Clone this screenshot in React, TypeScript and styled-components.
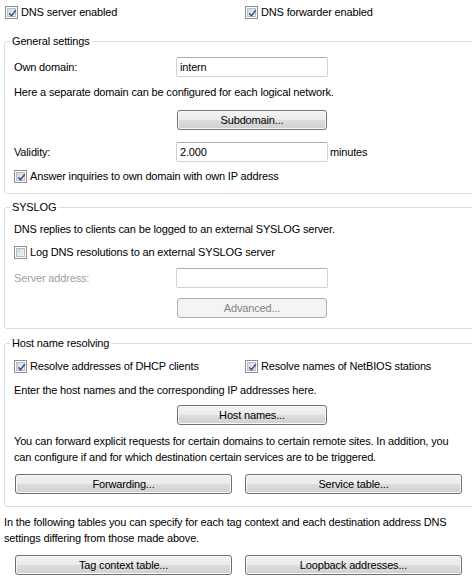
import styled, { createGlobalStyle } from "styled-components";

const GlobalStyle = createGlobalStyle`
  html, body {
    margin: 0;
    padding: 0;
    background: #fff;
    overflow: hidden;
  }
  body {
    font-family: "Liberation Sans", Arial, sans-serif;
    font-size: 11px;
    letter-spacing: -0.16px;
    color: #000;
  }
`;

const Page = styled.div`
  width: 480px;
  padding: 5px 0 0 4px;
  box-sizing: border-box;
`;

const TopRow = styled.div`
  display: grid;
  grid-template-columns: 240px auto;
  padding-left: 1px;
`;

const Group = styled.fieldset<{ $mt: number; $pb: number }>`
  margin: ${(p) => p.$mt}px 0 0 0;
  padding: 0 9px ${(p) => p.$pb}px 9px;
  border: 1px solid #d5dfe5;
  border-radius: 3px;
  min-width: 0;
`;

const Legend = styled.legend`
  margin-left: -4px;
  padding: 0 2px;
  line-height: 14px;
`;

const CheckLabel = styled.label<{ $mt?: number }>`
  display: flex;
  align-items: center;
  gap: 3px;
  height: 14px;
  line-height: 14px;
  white-space: nowrap;
  margin-top: ${(p) => p.$mt ?? 0}px;
`;

const Box = styled.span`
  position: relative;
  width: 13px;
  height: 13px;
  box-sizing: border-box;
  border: 1px solid #8e8f8f;
  background: #fff;
  padding: 1px;
  display: flex;
  flex-shrink: 0;
`;

const BoxInner = styled.span`
  flex: 1;
  border: 1px solid #b9bcc0;
  background: linear-gradient(135deg, #d4d7db 0%, #f4f4f4 100%);
`;

const Tick = styled.svg`
  position: absolute;
  left: 2px;
  top: 2px;
`;

const CheckRow = styled.div<{ $mt: number }>`
  display: grid;
  grid-template-columns: 231px auto;
  margin-top: ${(p) => p.$mt}px;
`;

const FieldRow = styled.div<{ $mt: number }>`
  display: grid;
  grid-template-columns: 162px 152px auto;
  align-items: center;
  height: 20px;
  margin-top: ${(p) => p.$mt}px;
`;

const Label = styled.span<{ $disabled?: boolean }>`
  color: ${(p) => (p.$disabled ? "#a0a0a0" : "#000")};
`;

const Unit = styled.span`
  padding-left: 2px;
`;

const Input = styled.input`
  width: 152px;
  height: 20px;
  box-sizing: border-box;
  border: 1px solid #d0d4d9;
  border-top-color: #abadb3;
  border-radius: 2px;
  padding: 0 3px;
  font: inherit;
  letter-spacing: inherit;
  color: #000;
  background: #fff;
  outline: none;
`;

const Para = styled.p<{ $mt: number }>`
  margin: ${(p) => p.$mt}px 0 0 0;
  line-height: 16px;
  white-space: nowrap;
`;

const Button = styled.button<{ $w: number }>`
  width: ${(p) => p.$w}px;
  height: 20px;
  box-sizing: border-box;
  margin-left: 1px;
  border: 1px solid #707070;
  border-radius: 3px;
  padding: 0;
  background: linear-gradient(#f2f2f2 0%, #ebebeb 50%, #dddddd 51%, #d0d0d0 100%);
  box-shadow: inset 0 0 0 1px #fafafa;
  font: inherit;
  letter-spacing: inherit;
  color: #000;
  &:disabled {
    border-color: #adb2b5;
    background: #f4f4f4;
    box-shadow: none;
    color: #838383;
  }
`;

const ButtonPair = styled.div<{ $mt: number; $pl: number }>`
  display: grid;
  grid-template-columns: 217px 217px;
  column-gap: 13px;
  margin-top: ${(p) => p.$mt}px;
  padding-left: ${(p) => p.$pl}px;
`;

const Check = ({ label, checked, mt }: { label: string; checked?: boolean; mt?: number }) => (
  <CheckLabel $mt={mt}>
    <Box>
      <BoxInner />
      {checked && (
        <Tick width="9" height="9" viewBox="0 0 9 9">
          <path d="M1.2 4.3 L3.6 6.8 L7.8 1.2" fill="none" stroke="#42599a" strokeWidth="1.7" />
        </Tick>
      )}
    </Box>
    {label}
  </CheckLabel>
);

export default function App() {
  return (
    <Page>
      <GlobalStyle />
      <TopRow>
        <Check label="DNS server enabled" checked />
        <Check label="DNS forwarder enabled" checked />
      </TopRow>

      <Group $mt={15} $pb={10}>
        <Legend>General settings</Legend>
        <FieldRow $mt={9}>
          <Label>Own domain:</Label>
          <Input defaultValue="intern" />
        </FieldRow>
        <Para $mt={7}>Here a separate domain can be configured for each logical network.</Para>
        <FieldRow $mt={10}>
          <span />
          <Button $w={150}>Subdomain...</Button>
        </FieldRow>
        <FieldRow $mt={12}>
          <Label>Validity:</Label>
          <Input defaultValue="2.000" />
          <Unit>minutes</Unit>
        </FieldRow>
        <Check mt={7} label="Answer inquiries to own domain with own IP address" checked />
      </Group>

      <Group $mt={6} $pb={10}>
        <Legend>SYSLOG</Legend>
        <Para $mt={7}>DNS replies to clients can be logged to an external SYSLOG server.</Para>
        <Check mt={8} label="Log DNS resolutions to an external SYSLOG server" />
        <FieldRow $mt={9}>
          <Label $disabled>Server address:</Label>
          <Input disabled />
        </FieldRow>
        <FieldRow $mt={10}>
          <span />
          <Button $w={150} disabled>
            Advanced...
          </Button>
        </FieldRow>
      </Group>

      <Group $mt={7} $pb={12}>
        <Legend>Host name resolving</Legend>
        <CheckRow $mt={9}>
          <Check label="Resolve addresses of DHCP clients" checked />
          <Check label="Resolve names of NetBIOS stations" checked />
        </CheckRow>
        <Para $mt={9}>Enter the host names and the corresponding IP addresses here.</Para>
        <FieldRow $mt={7}>
          <span />
          <Button $w={150}>Host names...</Button>
        </FieldRow>
        <Para $mt={8}>
          You can forward explicit requests for certain domains to certain remote sites. In addition, you
          <br />
          can configure if and for which destination certain services are to be triggered.
        </Para>
        <ButtonPair $mt={9} $pl={0}>
          <Button $w={217}>Forwarding...</Button>
          <Button $w={217}>Service table...</Button>
        </ButtonPair>
      </Group>

      <Para $mt={7}>
        In the following tables you can specify for each tag context and each destination address DNS
        <br />
        settings differing from those made above.
      </Para>
      <ButtonPair $mt={9} $pl={10}>
        <Button $w={217}>Tag context table...</Button>
        <Button $w={217}>Loopback addresses...</Button>
      </ButtonPair>
    </Page>
  );
}
